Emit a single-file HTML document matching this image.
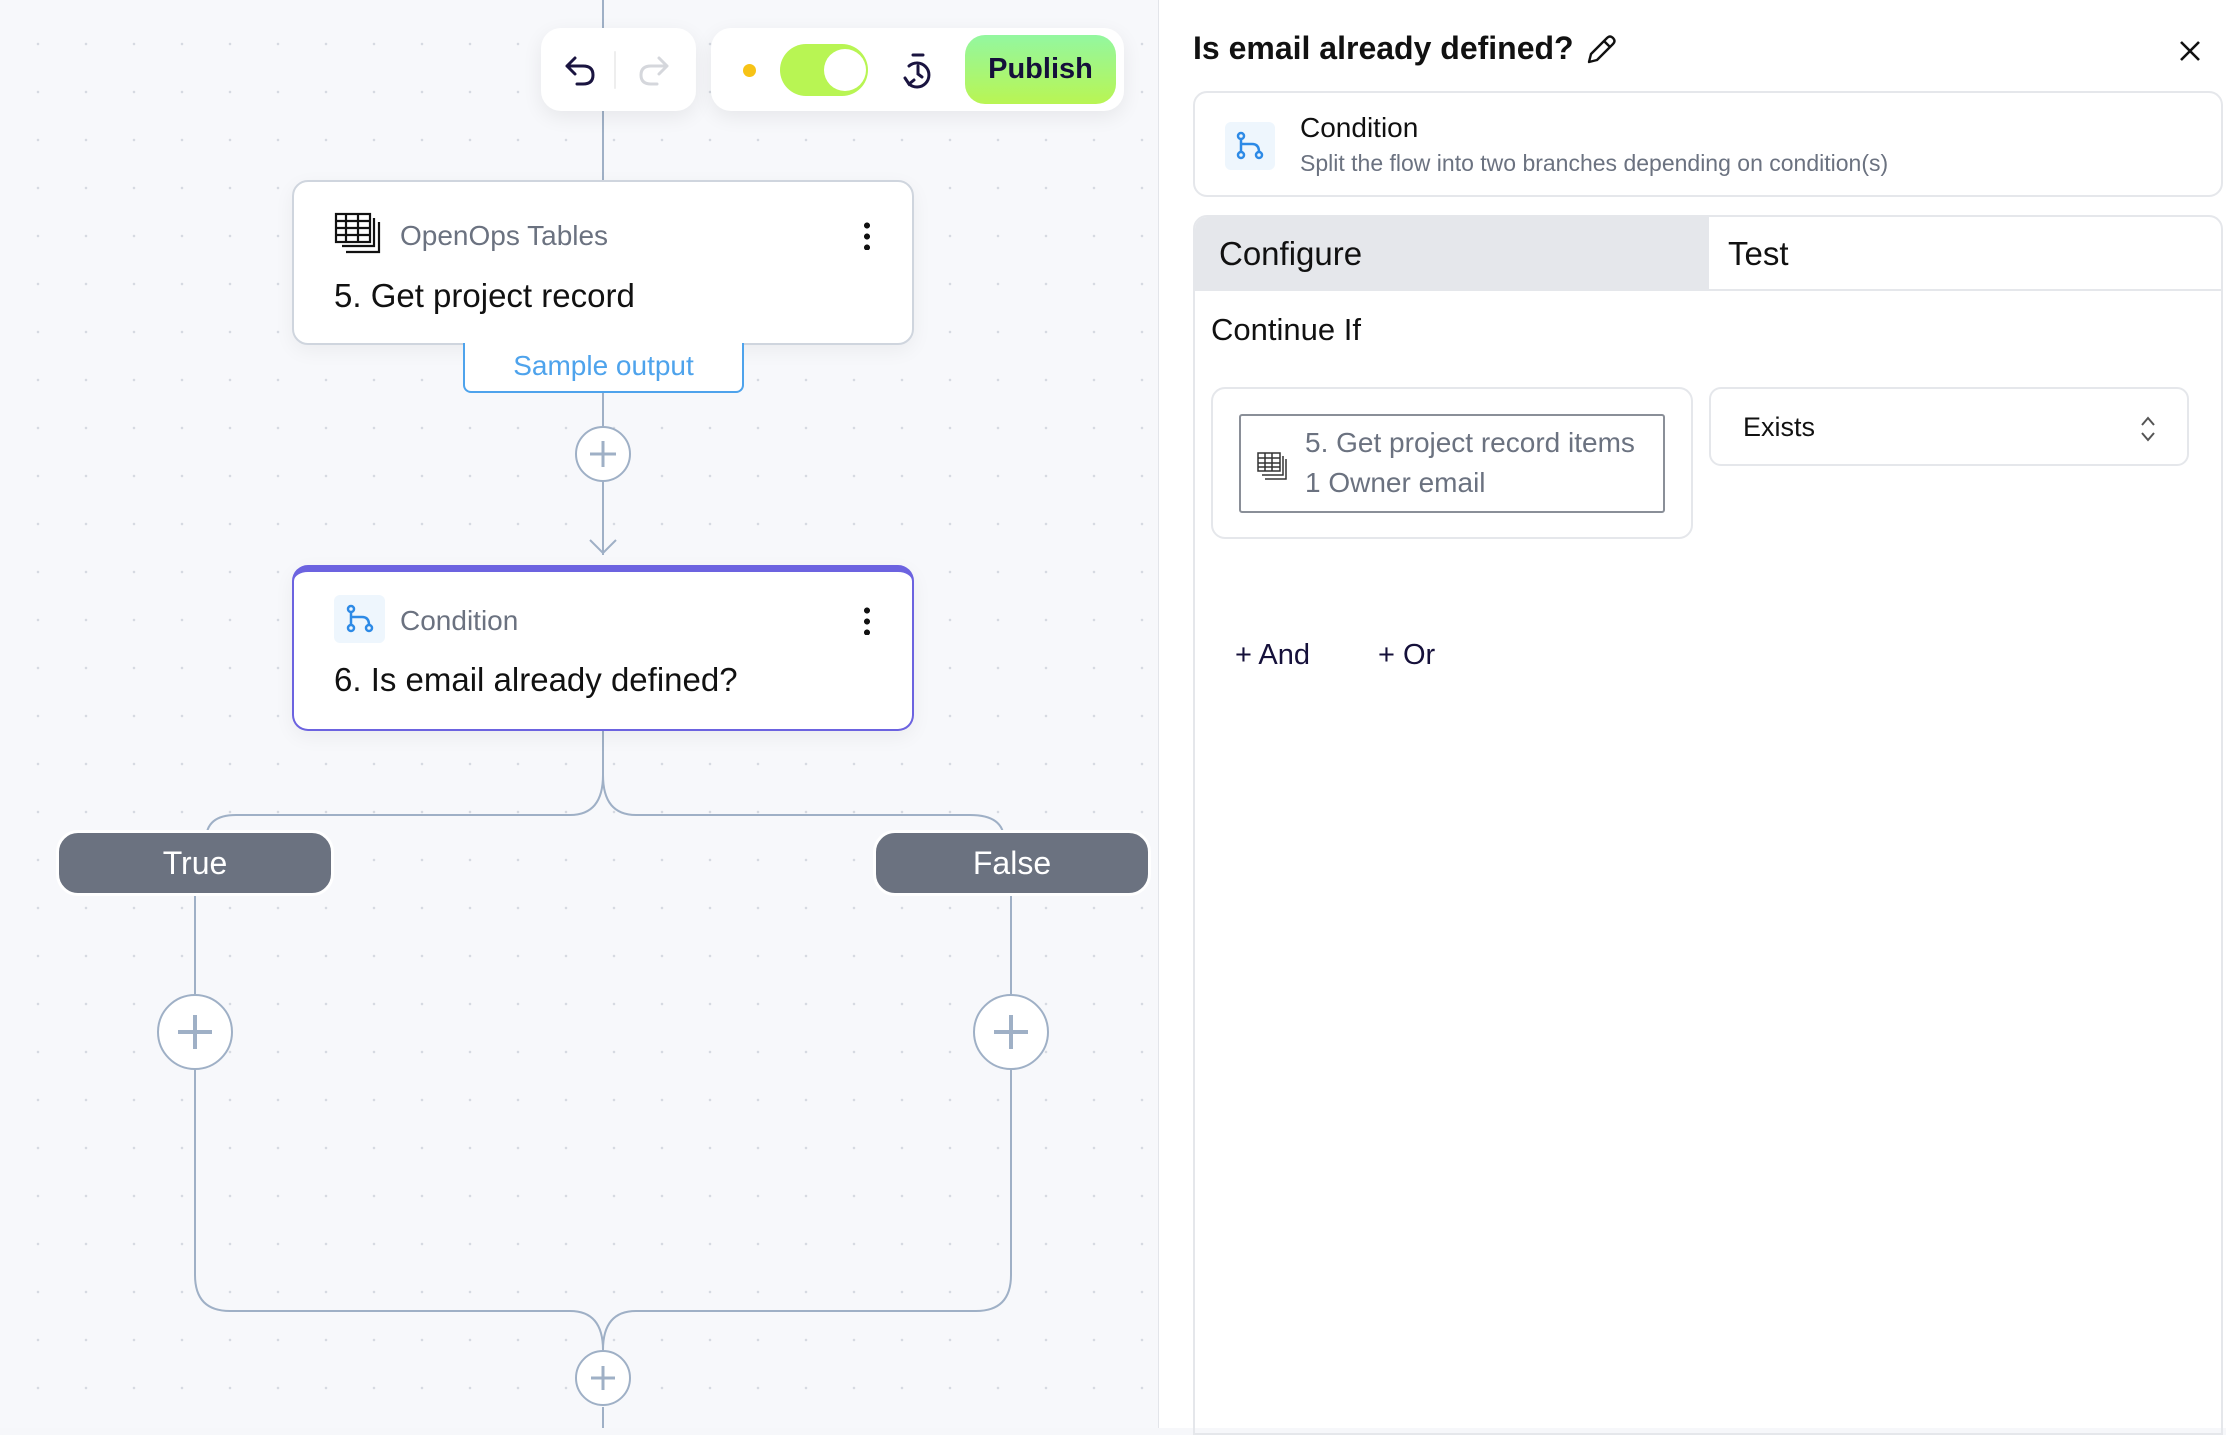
<!DOCTYPE html>
<html><head><meta charset="utf-8"><style>
*{box-sizing:border-box;margin:0;padding:0}
body{width:2226px;height:1428px;overflow:hidden;position:relative;font-family:"Liberation Sans",sans-serif;background:#f6f7fa;color:#111}
.canvas{position:absolute;left:0;top:0;width:1158px;height:1428px;background-color:#f7f8fb;background-image:radial-gradient(circle,#d6dae2 1.1px,transparent 1.5px);background-size:48px 48px;background-position:14px 20px}
.abs{position:absolute}
.card{position:absolute;background:#fff;border:2px solid #cfd5de;border-radius:16px;box-shadow:0 6px 20px rgba(0,0,0,.05)}
.panel{position:absolute;left:1158px;top:0;width:1068px;height:1428px;background:#fff;border-left:1px solid #e3e5ea}
</style></head><body>
<div class="canvas"></div>
<svg class="abs" style="left:0;top:0" width="1158" height="1428" fill="none" stroke="#9fb0c6" stroke-width="2">
<path d="M603 0V180M603 393V434M603 474V555M590 540L603 553L616 540"/>
<path d="M603 730V775Q603 815 570 815H236Q206 815 206 840M603 775Q603 815 636 815H970Q1004 815 1004 840"/>
<path d="M195 894V994M195 1070V1275Q195 1311 230 1311H570Q603 1311 603 1350M1011 894V994M1011 1070V1275Q1011 1311 976 1311H636Q603 1311 603 1350M603 1407V1428"/>
<circle cx="603" cy="454" r="27" fill="#fff"/><path d="M590 454H616M603 441V467" stroke-width="3"/>
<circle cx="195" cy="1032" r="37" fill="#fff"/><path d="M178 1032H212M195 1015V1049" stroke-width="4"/>
<circle cx="1011" cy="1032" r="37" fill="#fff"/><path d="M994 1032H1028M1011 1015V1049" stroke-width="4"/>
<circle cx="603" cy="1378" r="27" fill="#fff"/><path d="M591 1378H615M603 1366V1390" stroke-width="3"/>
</svg>
<div class="abs" style="left:541px;top:28px;width:155px;height:83px;background:#fff;border-radius:20px;box-shadow:0 6px 20px rgba(0,0,0,.07)">
<svg class="abs" style="left:20px;top:22px" width="120" height="40" fill="none" stroke-width="3" stroke-linecap="round" stroke-linejoin="round"><path d="M14 8L6 16L14 24M6 16H22Q32 16 32 25Q32 34 22 34H16" stroke="#1a1440"/><path d="M54 2V38" stroke="#eee" stroke-width="2"/><path d="M98 8L106 16L98 24M106 16H90Q80 16 80 25Q80 34 90 34H96" stroke="#d5d7dc"/></svg></div>
<div class="abs" style="left:711px;top:28px;width:413px;height:83px;background:#fff;border-radius:20px;box-shadow:0 6px 20px rgba(0,0,0,.07)">
<div class="abs" style="left:32px;top:36px;width:13px;height:13px;border-radius:50%;background:#f7c316"></div>
<div class="abs" style="left:69px;top:16px;width:88px;height:52px;border-radius:26px;background:#b8f553"></div>
<div class="abs" style="left:113px;top:21px;width:42px;height:42px;border-radius:50%;background:#fff"></div>
<svg class="abs" style="left:190px;top:24px" width="34" height="38" fill="none" stroke="#1a1440" stroke-width="3" stroke-linecap="round"><path d="M12 3H22M17 14V22L21 25"/><path d="M8 14A12 12 0 1 1 8 32"/><path d="M4 26L8 32L13 28"/></svg>
<div class="abs" style="left:254px;top:7px;width:151px;height:69px;border-radius:20px;background:linear-gradient(180deg,#93f7a0,#b9f553);font-weight:bold;font-size:29px;color:#15103a;text-align:center;line-height:69px">Publish</div>
</div>
<div class="card" style="left:292px;top:180px;width:622px;height:165px">
<svg class="abs" style="left:40px;top:30px" width="50" height="46" fill="none" stroke="#111" stroke-width="2.2"><rect x="2" y="2" width="34" height="28"/><path d="M2 9H36M2 16H36M2 23H36M12 2V30M24 2V30M40 6V34H8M45 10V40H12"/></svg>
<div class="abs" style="left:106px;top:38px;font-size:28px;color:#6b7280">OpenOps Tables</div>
<div class="abs" style="left:40px;top:95px;font-size:33px;color:#111">5. Get project record</div>
<div class="abs" style="left:570px;top:38px;width:6px;height:30px;background:radial-gradient(circle,#111 2.8px,transparent 3.2px) 0 0/6px 11px"></div>
</div>
<div class="abs" style="left:463px;top:343px;width:281px;height:50px;background:#fff;border:2px solid #4ea3ec;border-top:none;border-radius:0 0 8px 8px;color:#4ea3ec;font-size:28px;text-align:center;line-height:46px">Sample output</div>
<div class="card" style="left:292px;top:565px;width:622px;height:166px;border-color:#6c63e0;border-top-width:7px">
<div class="abs" style="left:40px;top:23px;width:51px;height:48px;border-radius:6px;background:#eef6fd"></div>
<svg class="abs" style="left:50px;top:31px" width="32" height="32" fill="none" stroke="#2d8ae6" stroke-width="2.5"><circle cx="7" cy="6" r="3"/><circle cx="7" cy="25" r="3"/><circle cx="25" cy="25" r="3"/><path d="M7 9V22M7 14H18Q25 14 25 22"/></svg>
<div class="abs" style="left:106px;top:33px;font-size:28px;color:#6b7280">Condition</div>
<div class="abs" style="left:40px;top:89px;font-size:33px;color:#111">6. Is email already defined?</div>
<div class="abs" style="left:570px;top:33px;width:6px;height:30px;background:radial-gradient(circle,#111 2.8px,transparent 3.2px) 0 0/6px 11px"></div>
</div>
<div class="abs" style="left:56px;top:830px;width:278px;height:66px;border:3px solid #fff;border-radius:22px;background:#6b7280;color:#fff;font-size:32px;text-align:center;line-height:60px">True</div>
<div class="abs" style="left:873px;top:830px;width:278px;height:66px;border:3px solid #fff;border-radius:22px;background:#6b7280;color:#fff;font-size:32px;text-align:center;line-height:60px">False</div>
<div class="panel">
<div class="abs" style="left:34px;top:30px;font-size:32px;font-weight:bold;color:#111">Is email already defined?</div>
<svg class="abs" style="left:425px;top:33px" width="34" height="34" fill="none" stroke="#111" stroke-width="2.4" stroke-linejoin="round"><path d="M5 29L7 21L23 5Q26 2 29 5Q32 8 29 11L13 27ZM20 8L26 14"/></svg>
<svg class="abs" style="left:1020px;top:40px" width="22" height="22" stroke="#111" stroke-width="2.6"><path d="M2 2L20 20M20 2L2 20"/></svg>
<div class="abs" style="left:34px;top:91px;width:1030px;height:106px;border:2px solid #e5e7eb;border-radius:14px"></div>
<div class="abs" style="left:66px;top:122px;width:50px;height:48px;border-radius:6px;background:#eef6fd"></div>
<svg class="abs" style="left:75px;top:130px" width="32" height="32" fill="none" stroke="#2d8ae6" stroke-width="2.5"><circle cx="7" cy="6" r="3"/><circle cx="7" cy="25" r="3"/><circle cx="25" cy="25" r="3"/><path d="M7 9V22M7 14H18Q25 14 25 22"/></svg>
<div class="abs" style="left:141px;top:112px;font-size:28px;color:#111">Condition</div>
<div class="abs" style="left:141px;top:150px;font-size:23px;color:#6b7280">Split the flow into two branches depending on condition(s)</div>
<div class="abs" style="left:34px;top:215px;width:1030px;height:1220px;border:2px solid #e5e7eb;border-radius:14px 14px 0 0;overflow:hidden">
<div class="abs" style="left:0;top:0;width:514px;height:73px;background:#e5e7eb"></div>
<div class="abs" style="left:0;top:72px;width:1030px;height:2px;background:#e5e7eb"></div>
<div class="abs" style="left:24px;top:18px;font-size:33px;color:#111">Configure</div>
<div class="abs" style="left:533px;top:18px;font-size:33px;color:#111">Test</div>
<div class="abs" style="left:16px;top:95px;font-size:31px;color:#111">Continue If</div>
<div class="abs" style="left:16px;top:170px;width:482px;height:152px;border:2px solid #e5e7eb;border-radius:14px"></div>
<div class="abs" style="left:44px;top:197px;width:426px;height:99px;border:2px solid #8a8f98;border-radius:3px"></div>
<svg class="abs" style="left:62px;top:235px" width="32" height="30" fill="none" stroke="#333" stroke-width="1.5"><rect x="1" y="1" width="22" height="18"/><path d="M1 6H23M1 11H23M1 15H23M8 1V19M15 1V19M26 4V23H5M29 7V27H8"/></svg>
<div class="abs" style="left:110px;top:206px;font-size:28px;color:#6b7280;line-height:40px">5. Get project record items<br>1 Owner email</div>
<div class="abs" style="left:514px;top:170px;width:480px;height:79px;border:2px solid #e5e7eb;border-radius:12px"></div>
<div class="abs" style="left:548px;top:195px;font-size:27px;color:#111">Exists</div>
<svg class="abs" style="left:943px;top:198px" width="20" height="28" fill="none" stroke="#555" stroke-width="2"><path d="M4 10L10 3L16 10M4 18L10 25L16 18"/></svg>
<div class="abs" style="left:40px;top:422px;font-size:29px;color:#15103a">+ And</div>
<div class="abs" style="left:183px;top:422px;font-size:29px;color:#15103a">+ Or</div>
</div>
</div>
</body></html>
